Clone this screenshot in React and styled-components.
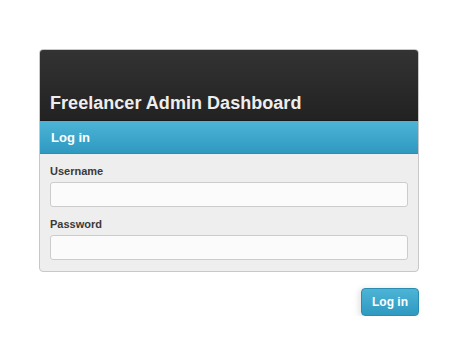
import React from 'react'
import styled, { createGlobalStyle } from 'styled-components'

const GlobalStyle = createGlobalStyle`
    body {
        margin: 0;
        background: #fff;
        font-family: 'Liberation Sans', Arial, sans-serif;
    }
`

const Page = styled.div`
    width: 380px;
    padding: 49px 0 0 39px;
`

const Card = styled.div`
    border: 1px solid #c8c8c8;
    border-radius: 4px;
    overflow: hidden;
    background: #eeeeee;
`

const Header = styled.div`
    height: 71px;
    box-sizing: border-box;
    padding: 0 10px 6px 10px;
    display: flex;
    align-items: flex-end;
    background: linear-gradient(#333333, #222222);
    border-bottom: 1px solid #1a1a1a;
`

const Title = styled.h1`
    margin: 0;
    color: #eeeeee;
    font-size: 18px;
    font-weight: bold;
    line-height: 22px;
    letter-spacing: 0.04px;
`

const Bar = styled.div`
    height: 33px;
    box-sizing: border-box;
    padding: 0 11px;
    display: flex;
    align-items: center;
    background: linear-gradient(#4db4d6, #2f99c0);
    border-bottom: 1px solid #2a8db2;
    color: #fff;
    font-size: 13px;
    font-weight: bold;
`

const Form = styled.div`
    padding: 10px 10px 11px 10px;
    display: flex;
    flex-direction: column;
`

const Label = styled.label`
    color: #3a3a3a;
    font-size: 11px;
    font-weight: bold;
    line-height: 14px;
    margin-bottom: 4px;
`

const Input = styled.input`
    height: 25px;
    box-sizing: border-box;
    border: 1px solid #cccccc;
    border-radius: 3px;
    background: #fbfbfb;
    margin-bottom: ${p => (p.$last ? '0' : '10px')};
    outline: none;
`

const Actions = styled.div`
    display: flex;
    justify-content: flex-end;
    margin-top: 16px;
`

const Button = styled.button`
    width: 58px;
    height: 28px;
    border: 1px solid #2a8cb0;
    border-radius: 4px;
    background: linear-gradient(#4db4d6, #2f99c0);
    color: #fff;
    font-family: 'Liberation Sans', Arial, sans-serif;
    font-size: 12px;
    font-weight: bold;
    box-shadow: -2px 1px 6px rgba(0, 0, 0, 0.12);
    cursor: pointer;
`

export default function App() {
    return (
        <>
            <GlobalStyle />
            <Page>
                <Card>
                    <Header>
                        <Title>Freelancer Admin Dashboard</Title>
                    </Header>
                    <Bar>Log in</Bar>
                    <Form>
                        <Label htmlFor='username'>Username</Label>
                        <Input id='username' type='text' />
                        <Label htmlFor='password'>Password</Label>
                        <Input id='password' type='password' $last />
                    </Form>
                </Card>
                <Actions>
                    <Button type='submit'>Log in</Button>
                </Actions>
            </Page>
        </>
    )
}
